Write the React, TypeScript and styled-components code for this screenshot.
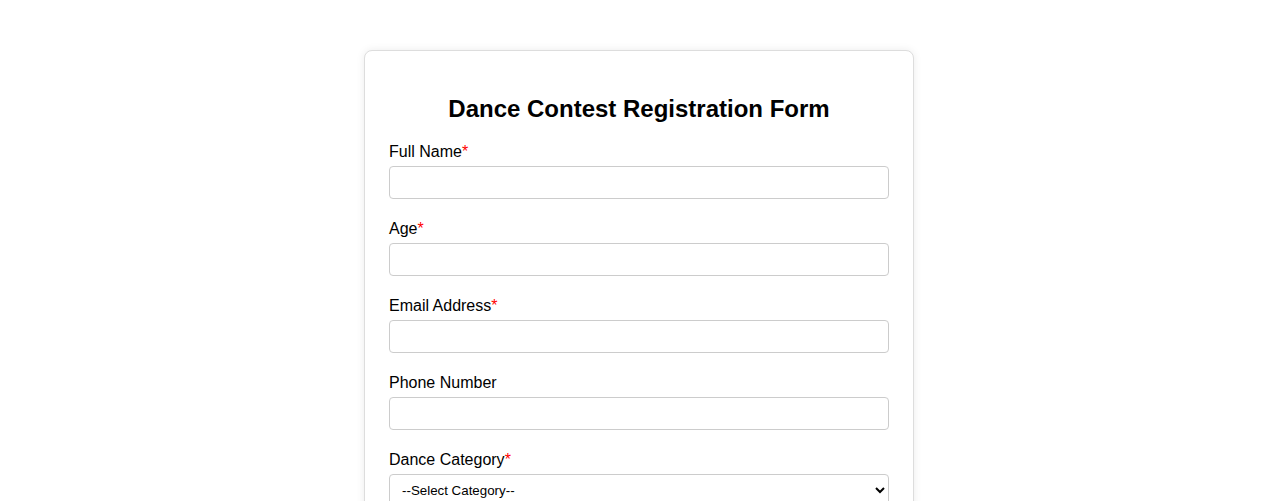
import styled, { createGlobalStyle } from 'styled-components';

// ===== styled =====
const Global = createGlobalStyle`
  body {
    margin: 0;
    background: #fff;
    font-family: "Liberation Sans", Arial, sans-serif;
    color: #000;
  }
`;

const Card = styled.form`
  box-sizing: border-box;
  width: 550px;
  margin: 50px auto;
  padding: 24px;
  border: 1px solid #ddd;
  border-radius: 8px;
  box-shadow: 0 0 8px rgba(0, 0, 0, 0.08);
  background: #fff;
`;

const Title = styled.h2`
  font-size: 24px;
  font-weight: bold;
  text-align: center;
  margin: 20px 0;
`;

const Group = styled.div`
  margin-bottom: 21px;
`;

const Label = styled.label`
  display: block;
  font-size: 16px;
  margin-bottom: 5px;
`;

const Req = styled.span`
  color: red;
`;

const Input = styled.input`
  box-sizing: border-box;
  display: block;
  width: 100%;
  padding: 8px;
  font-family: "Liberation Sans", Arial, sans-serif;
  font-size: 13.333px;
  border: 1px solid #ccc;
  border-radius: 4px;
`;

const Select = styled.select`
  box-sizing: border-box;
  display: block;
  width: 100%;
  padding: 7px 8px;
  font-family: "Liberation Sans", Arial, sans-serif;
  font-size: 13.333px;
  border: 1px solid #ccc;
  border-radius: 4px;
  background: #fff;
  color: #000;
`;

const Submit = styled.button`
  width: 100%;
  padding: 10px;
  font-size: 16px;
  border: none;
  border-radius: 4px;
  background: #4caf50;
  color: #fff;
  cursor: pointer;
`;

const fields = [
  { id: 'name', label: 'Full Name', type: 'text', required: true },
  { id: 'age', label: 'Age', type: 'number', required: true },
  { id: 'email', label: 'Email Address', type: 'email', required: true },
  { id: 'phone', label: 'Phone Number', type: 'tel', required: false },
];

// ===== page =====
export default function App() {
  return (
    <>
      <Global />
      <Card onSubmit={e => e.preventDefault()}>
        <Title>Dance Contest Registration Form</Title>

        {fields.map(f => (
          <Group key={f.id}>
            <Label htmlFor={f.id}>
              {f.label}
              {f.required && <Req>*</Req>}
            </Label>
            <Input id={f.id} type={f.type} />
          </Group>
        ))}

        <Group>
          <Label htmlFor="category">
            Dance Category<Req>*</Req>
          </Label>
          <Select id="category" defaultValue="">
            <option value="">--Select Category--</option>
            <option value="hiphop">Hip Hop</option>
            <option value="contemporary">Contemporary</option>
            <option value="classical">Classical</option>
            <option value="salsa">Salsa</option>
          </Select>
        </Group>

        <Submit type="submit">Register</Submit>
      </Card>
    </>
  );
}
